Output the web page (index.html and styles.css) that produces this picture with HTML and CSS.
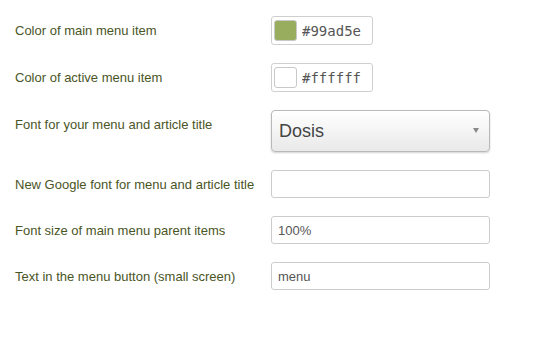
FILE: index.html
```html
<!DOCTYPE html>
<html lang="en">
<head>
    <meta charset="UTF-8">
    <title>Menu options</title>
    <link rel="stylesheet" href="styles.css">
</head>
<body>
    <form class="options">
        <!-- colours -->
        <div class="row">
            <label class="row-label">Color of main menu item</label>
            <div class="color-field">
                <span class="swatch" style="background-color: #99ad5e"></span>
                <input type="text" value="#99ad5e">
            </div>
        </div>

        <div class="row">
            <label class="row-label">Color of active menu item</label>
            <div class="color-field">
                <span class="swatch" style="background-color: #ffffff"></span>
                <input type="text" value="#ffffff">
            </div>
        </div>

        <!-- fonts -->
        <div class="row">
            <label class="row-label">Font for your menu and article title</label>
            <div class="select-field">
                <select>
                    <option>Dosis</option>
                </select>
            </div>
        </div>

        <div class="row">
            <label class="row-label">New Google font for menu and article title</label>
            <input class="text-field" type="text" value="">
        </div>

        <div class="row">
            <label class="row-label">Font size of main menu parent items</label>
            <input class="text-field" type="text" value="100%">
        </div>

        <div class="row">
            <label class="row-label">Text in the menu button (small screen)</label>
            <input class="text-field" type="text" value="menu">
        </div>
    </form>
</body>
</html>
```

FILE: styles.css
```css
body {
    margin: 0;
    padding: 0;
    background: #fff;
    font-family: 'Liberation Sans', Arial, sans-serif;
}

.options {
    padding: 16px 0 0 15px;
}

.row {
    display: flex;
    align-items: flex-start;
    margin-bottom: 18px;
}

.row-label {
    width: 256px;
    flex-shrink: 0;
    padding-top: 6px;
    font-size: 13px;
    line-height: 18px;
    color: #4a5526;
}

.color-field {
    display: flex;
    align-items: center;
    box-sizing: border-box;
    width: 102px;
    height: 29px;
    padding-left: 2px;
    border: 1px solid #cfcfcf;
    border-radius: 3px;
    background: #fff;
}

.color-field .swatch {
    width: 21px;
    height: 19px;
    border: 1px solid #c8c8c8;
    border-radius: 3px;
}

.color-field input {
    width: 66px;
    margin-left: 5px;
    padding: 0;
    border: none;
    outline: none;
    font-family: 'DejaVu Sans Mono', monospace;
    font-size: 14px;
    color: #555;
    background: transparent;
}

.select-field {
    position: relative;
    width: 219px;
}

.select-field select {
    appearance: none;
    -webkit-appearance: none;
    box-sizing: border-box;
    width: 100%;
    height: 42px;
    margin: 0;
    padding: 0 0 0 7px;
    border: 1px solid #b9b9b9;
    border-radius: 4px;
    background: linear-gradient(#ffffff, #e9e9e9);
    box-shadow: 0 1px 2px rgba(0,0,0,0.18);
    font-family: 'Liberation Sans', Arial, sans-serif;
    font-size: 18px;
    color: #444;
    outline: none;
}

.select-field::after {
    content: "";
    position: absolute;
    right: 11px;
    top: 18px;
    border-left: 3px solid transparent;
    border-right: 3px solid transparent;
    border-top: 5px solid #888;
}

.text-field {
    box-sizing: border-box;
    width: 219px;
    height: 28px;
    margin: 0;
    padding: 0 6px;
    border: 1px solid #cccccc;
    border-radius: 3px;
    font-family: 'Liberation Sans', Arial, sans-serif;
    font-size: 13px;
    color: #555;
    outline: none;
}
```
